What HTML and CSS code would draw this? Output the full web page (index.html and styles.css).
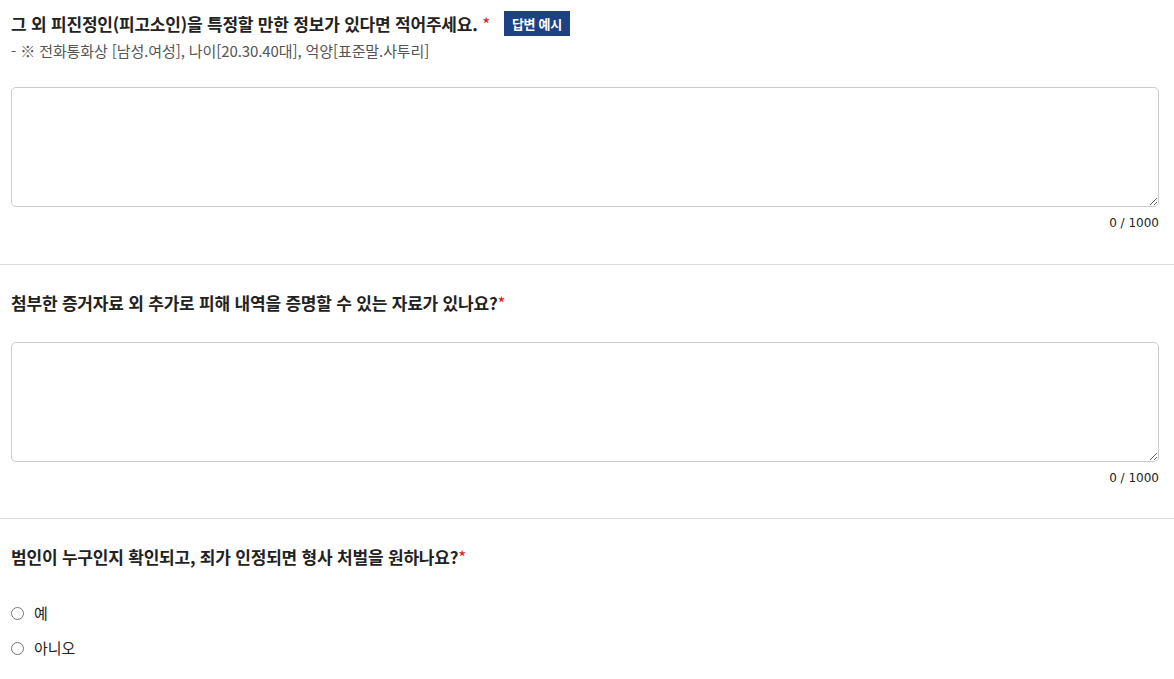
FILE: index.html
```html
<!DOCTYPE html>
<html lang="ko">
<head>
<meta charset="utf-8">
<link rel="stylesheet" href="styles.css">
</head>
<body>
<div class="form">
  <section class="q">
    <div class="q-head">
      <h3 class="q-title">그 외 피진정인(피고소인)을 특정할 만한 정보가 있다면 적어주세요. <span class="req">*</span></h3>
      <button class="ex-btn" type="button">답변 예시</button>
    </div>
    <p class="q-desc">- ※ 전화통화상 [남성.여성], 나이[20.30.40대], 억양[표준말.사투리]</p>
    <textarea class="answer"></textarea>
    <div class="counter">0 / 1000</div>
  </section>
  <section class="q">
    <div class="q-head">
      <h3 class="q-title">첨부한 증거자료 외 추가로 피해 내역을 증명할 수 있는 자료가 있나요?<span class="req">*</span></h3>
    </div>
    <textarea class="answer"></textarea>
    <div class="counter">0 / 1000</div>
  </section>
  <section class="q last">
    <div class="q-head">
      <h3 class="q-title">범인이 누구인지 확인되고, 죄가 인정되면 형사 처벌을 원하나요?<span class="req">*</span></h3>
    </div>
    <div class="options">
      <label class="opt"><input type="radio" name="p"> <span>예</span></label>
      <label class="opt"><input type="radio" name="p"> <span>아니오</span></label>
    </div>
  </section>
</div>
</body>
</html>
```
FILE: styles.css
```css
* { box-sizing: border-box; }
html, body { margin: 0; padding: 0; background: #fff; }
body {
  font-family: "Noto Sans CJK KR", "Noto Sans", sans-serif;
  color: #222;
}
.q {
  padding: 10px 15px 33px 11px;
  border-bottom: 1px solid #ddd;
}
.q.last { border-bottom: none; }
.q + .q { padding-top: 24px; padding-bottom: 32px; }
.q-head {
  display: flex;
  align-items: center;
  gap: 14px;
  min-height: 27px;
}
.q-title {
  margin: 0;
  font-size: 17px;
  font-weight: 700;
  line-height: 24px;
  color: #222;
  letter-spacing: -0.2px;
}
.req { color: #e02020; font-weight: 400; }
.ex-btn {
  height: 25px;
  width: 66px;
  padding: 0;
  border: none;
  background: #1d4283;
  color: #fff;
  font-family: inherit;
  font-size: 13px;
  font-weight: 700;
  letter-spacing: -0.3px;
}
.q-desc {
  margin: 2px 0 0;
  font-size: 15px;
  line-height: 24px;
  color: #555;
  letter-spacing: -0.1px;
}
.answer {
  display: block;
  width: 100%;
  height: 120px;
  margin-top: 24px;
  border: 1px solid #ccc;
  border-radius: 5px;
  resize: vertical;
  font-family: inherit;
}
.q + .q .answer { margin-top: 26px; }
.counter {
  text-align: right;
  font-family: "DejaVu Sans", sans-serif;
  font-size: 12px;
  line-height: 16px;
  margin-top: 8px;
  color: #222;
}
.options {
  margin-top: 31px;
  display: flex;
  flex-direction: column;
  gap: 11px;
}
.opt {
  display: flex;
  align-items: center;
  gap: 10px;
  font-size: 15px;
  line-height: 24px;
}
.opt input { margin: 0; width: 13px; height: 13px; }
```
